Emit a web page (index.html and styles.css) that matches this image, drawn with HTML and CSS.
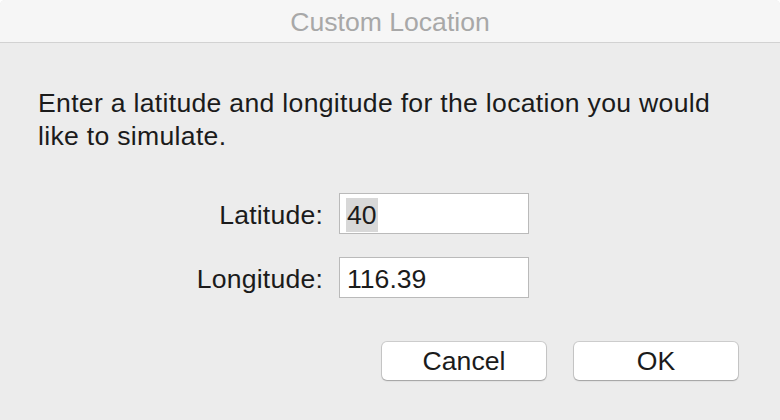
FILE: index.html
```html
<!DOCTYPE html>
<html>
<head>
<meta charset="utf-8">
<link rel="stylesheet" href="styles.css">
</head>
<body>
<div class="window">
  <div class="titlebar">Custom Location</div>
  <div class="content">
    <p class="message">Enter a latitude and longitude for the location you would like to simulate.</p>
    <div class="form">
      <div class="label">Latitude:</div>
      <div class="field"><span class="selected">40</span></div>
      <div class="label">Longitude:</div>
      <div class="field">116.39</div>
    </div>
    <div class="buttons">
      <div class="button">Cancel</div>
      <div class="button">OK</div>
    </div>
  </div>
</div>
</body>
</html>
```
FILE: styles.css
```css
html, body {
  margin: 0;
  padding: 0;
  background: #ffffff;
}
body {
  width: 780px;
  height: 420px;
  overflow: hidden;
  font-family: "Liberation Sans", Arial, sans-serif;
  font-size: 26.6px;
  color: #1b1b1b;
}
.window {
  width: 780px;
  height: 420px;
  background: #ececec;
  border-radius: 5px 5px 0 0;
  overflow: hidden;
  display: flex;
  flex-direction: column;
}
.titlebar {
  height: 42px;
  background: #f6f6f6;
  border-bottom: 1px solid #d2d2d2;
  color: #a8a8a8;
  text-align: center;
  line-height: 44px;
  flex: none;
}
.content {
  padding: 44px 42px 0 38px;
  display: flex;
  flex-direction: column;
}
.message {
  margin: 0;
  line-height: 33px;
  width: 700px;
  letter-spacing: 0.3px;
}
.form {
  display: grid;
  grid-template-columns: 285px 190px;
  column-gap: 16px;
  row-gap: 23px;
  margin-top: 40px;
}
.label {
  text-align: right;
  line-height: 41px;
  padding-top: 2px;
  height: 41px;
  box-sizing: border-box;
  letter-spacing: 0.2px;
}
.field {
  height: 41px;
  box-sizing: border-box;
  border: 1px solid #bababa;
  background: #ffffff;
  padding: 4px 0 0 7px;
  line-height: 34px;
}
.selected {
  display: inline-block;
  background: #d8d8d8;
  line-height: 34px;
  padding: 0 1px;
  margin-left: -1px;
}
.buttons {
  display: flex;
  justify-content: flex-end;
  gap: 28px;
  margin-top: 44px;
}
.button {
  width: 164px;
  height: 38px;
  box-sizing: border-box;
  background: #ffffff;
  border-radius: 5px;
  box-shadow: 0 0 0 1px rgba(0,0,0,0.13), 0 1px 1.5px rgba(0,0,0,0.22);
  text-align: center;
  line-height: 38px;
}
```
